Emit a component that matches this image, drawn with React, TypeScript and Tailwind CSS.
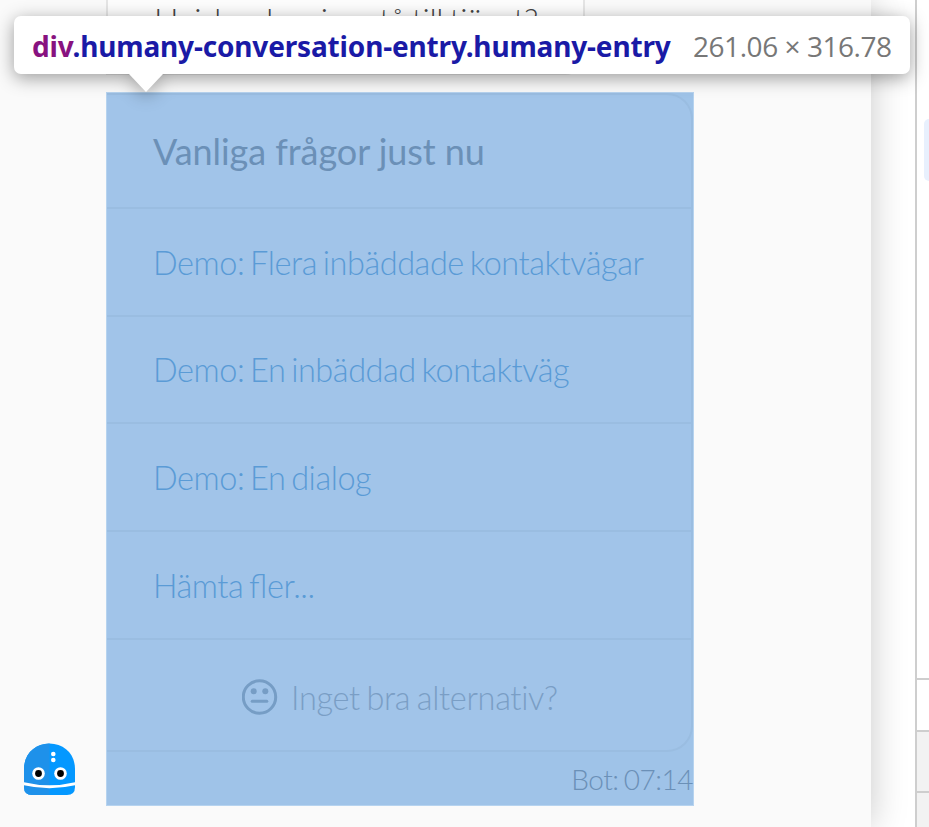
import React from "react";

const links = [
  { label: "Demo: Flera inbäddade kontaktvägar", height: "h-[108px]", offset: "pt-[2px]" },
  { label: "Demo: En inbäddad kontaktväg", height: "h-[107px]", offset: "pt-[1px]" },
  { label: "Demo: En dialog", height: "h-[108px]", offset: "pt-[2px]" },
  { label: "Hämta fler...", height: "h-[108px]", offset: "pt-[2px] [font-feature-settings:'liga'_1]" },
];

function BotAvatar() {
  return (
    <svg className="mb-[32px] ml-6 h-[52px] w-[51px] shrink-0" viewBox="0 0 51 52">
      <defs>
        <clipPath id="head">
          <path d="M0 26C0 11 11 .5 25.500 .5S51 11 51 26V44Q51 52 43 52H8Q0 52 0 44Z" />
        </clipPath>
      </defs>
      <g clipPath="url(#head)">
        <path fill="#0498ff" d="M0 0H51v52H0z" />
        <path fill="#1e91ea" d="M0 0h25.500v52H0z" />
        <path d="M-1 40.500Q25.500 47 52 40.500" fill="none" stroke="#fff" strokeWidth="2.800" />
      </g>
      <circle cx="29.300" cy="11" r="2.300" fill="#fff" />
      <circle cx="29.300" cy="17" r="2.300" fill="#fff" />
      <circle cx="14.500" cy="30.500" r="6.300" fill="#fff" />
      <circle cx="36.500" cy="30.500" r="6.300" fill="#fff" />
      <circle cx="14.500" cy="30.500" r="3.400" fill="#000" />
      <circle cx="36.500" cy="30.500" r="3.400" fill="#000" />
    </svg>
  );
}

function NeutralFace() {
  return (
    <svg className="mb-[2px] h-9 w-9 shrink-0" viewBox="0 0 36 36" fill="none" stroke="#769dc5" strokeWidth="3">
      <circle cx="17.500" cy="18" r="16.200" />
      <circle cx="11.700" cy="12.200" r="3" fill="#769dc5" stroke="none" />
      <circle cx="23.300" cy="12.200" r="3" fill="#769dc5" stroke="none" />
      <path d="M10.200 22.300h14.600" strokeLinecap="round" />
    </svg>
  );
}

function Tooltip() {
  return (
    <div className="absolute left-[14px] top-4 h-[58px] w-[896px] drop-shadow-[0_4px_9px_rgba(0,0,0,0.38)]">
      <div className="flex h-[58px] items-center whitespace-nowrap rounded-[7px] bg-white pl-[18px] pt-[2px] font-['Open_Sans',sans-serif] text-[28px]">
        <span className="w-[661px] shrink-0 font-['Noto_Sans',sans-serif] font-bold tracking-[-0.160px] text-[#1a1aa6]">
          <span className="text-[#881280]">div</span>.humany-conversation-entry.humany-entry
        </span>
        <span className="tracking-[-0.450px] text-[#777]">261.06 × 316.78</span>
      </div>
      <svg className="ml-[115px] block h-[18px] w-[34px]" viewBox="0 0 34 18">
        <path d="M0 0h34L17 18z" fill="#fff" />
      </svg>
    </div>
  );
}

export default function App() {
  return (
    <div className="relative flex h-[827px] w-[929px] overflow-hidden bg-white font-['Lato',sans-serif]">
      <div className="z-[1] flex w-[871px] shrink-0 bg-[#fafafa] shadow-[0_0_34px_rgba(0,0,0,0.22)]">
        <div className="flex w-[106px] shrink-0 flex-col justify-end">
          <BotAvatar />
        </div>
        <div className="flex w-[588px] flex-col">
          <div className="h-[75px] w-[479px] shrink-0 whitespace-nowrap rounded-br-[20px] border-x-2 border-b-2 border-[#e5e5e5] bg-[#fdfdfd] pl-[46px] text-[32.500px] leading-[41px] font-light tracking-[-0.380px] text-[#444] [word-spacing:-1.900px]">
            Hej, hur kan jag stå till tjänst?
          </div>
          <div className="mt-[17px] h-[714px] shrink-0 border border-[#b6d3ef] bg-[#9fc3e8]">
            <div className="h-[659px] overflow-hidden rounded-r-[26px] border-y-2 border-r-2 border-[#9abde1] bg-[#a1c4e9]">
              <div className="flex h-[114px] items-center whitespace-nowrap border-b-2 border-[#9abde1] pl-[46px] text-[36px] tracking-[-0.050px] text-[#6b90b7]">
                Vanliga frågor just nu
              </div>
              {links.map((link) => (
                <div
                  key={link.label}
                  className={`flex items-center whitespace-nowrap border-b-2 border-[#9abde1] pl-[46px] text-[32.500px] font-light tracking-[-0.440px] text-[#5a9bd6] [word-spacing:-2.600px] ${link.height} ${link.offset}`}
                >
                  {link.label}
                </div>
              ))}
              <div className="flex h-[112px] items-center gap-[13px] whitespace-nowrap pl-[135px] pt-[3px] text-[32.500px] font-light tracking-[-0.330px] text-[#7a9ec5] [word-spacing:-1.900px]">
                <NeutralFace />
                <span className="pt-[1px]">Inget bra alternativ?</span>
              </div>
            </div>
            <div className="flex justify-end whitespace-nowrap pt-[7px] text-[28px] leading-[40px] font-light tracking-[-0.480px] text-[#6b90b7] [word-spacing:-1.900px]">
              Bot: 07:14
            </div>
          </div>
        </div>
      </div>
      <div className="w-11 shrink-0" />
      <div className="z-[2] flex w-[14px] shrink-0 flex-col border-l-2 border-[#cecece] bg-white">
        <div className="flex h-[678px] flex-col items-end pt-[119px]">
          <div className="h-[62px] w-[5px] rounded-l-[7px] bg-[#e8f0fd]" />
        </div>
        <div className="h-[52px] border-t-2 border-[#cecece]" />
        <div className="h-[61px] border-t-2 border-[#cecece] bg-[#f2f2f2]" />
        <div className="h-[36px] border-t-2 border-[#cecece] bg-[#f2f2f2]" />
      </div>
      <div className="absolute inset-0 z-10">
        <Tooltip />
      </div>
    </div>
  );
}
